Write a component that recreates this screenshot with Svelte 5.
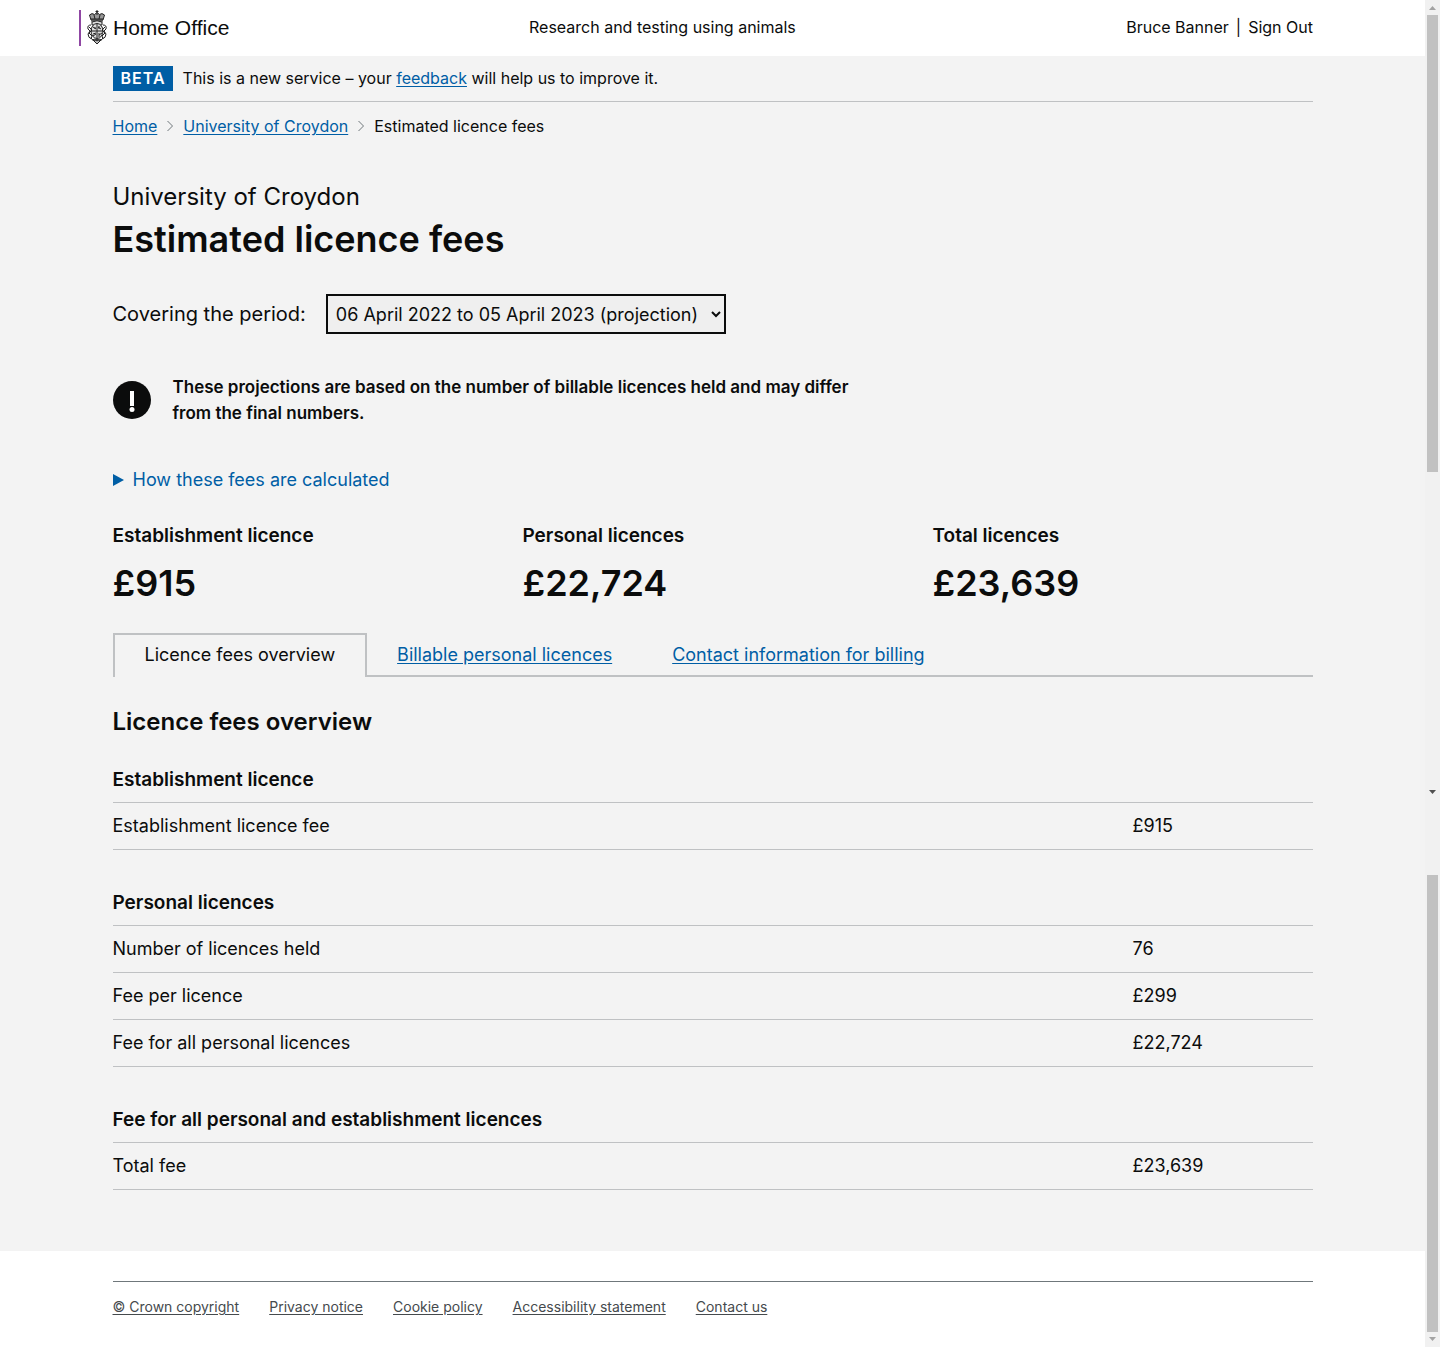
<script>
  const periods = ['06 April 2022 to 05 April 2023 (projection)', '06 April 2021 to 05 April 2022'];
  let period = $state(periods[0]);

  const totals = [
    { label: 'Establishment licence', amount: '£915' },
    { label: 'Personal licences', amount: '£22,724' },
    { label: 'Total licences', amount: '£23,639' }
  ];

  const sections = [
    { title: 'Establishment licence', rows: [['Establishment licence fee', '£915']] },
    {
      title: 'Personal licences',
      rows: [
        ['Number of licences held', '76'],
        ['Fee per licence', '£299'],
        ['Fee for all personal licences', '£22,724']
      ]
    },
    { title: 'Fee for all personal and establishment licences', rows: [['Total fee', '£23,639']] }
  ];

  const footerLinks = ['© Crown copyright', 'Privacy notice', 'Cookie policy', 'Accessibility statement', 'Contact us'];
</script>

<div class="window">
  <div class="page">
    <header>
      <div class="header-inner">
        <a class="logo" href="#home" aria-label="Home Office">
          <svg class="crest" viewBox="0 0 20 36" aria-hidden="true">
            <g fill="none" stroke="#222" stroke-width="1">
              <path d="M4 10 2.500 5Q5 2.500 7.500 4.500L10 2.500 12.500 4.500Q15 2.500 17.500 5L16 10Z" fill="#999" />
              <path d="M10 0v5M8.500 1.500h3M4 9h12M4 11h12M7 5l1 4M13 5l-1 4" />
              <path d="M5 12Q10 9.500 15 12L15 15H5Z" fill="#ddd" />
              <ellipse cx="10" cy="21" rx="6" ry="7.500" fill="#ddd" />
              <path d="M4 15Q0 15 1 19L3 21 1 24Q1 28 5 29L7 31M16 15Q20 15 19 19L17 21 19 24Q19 28 15 29L13 31" />
              <path d="M2 17l3 3-3 3 3 3-1 3M18 17l-3 3 3 3-3 3 1 3" />
              <path d="M10 14v14M4 21h12M6 17l3 2M11 17l3 2M6 24l3-1M12 25l3-2" />
              <path d="M7 18h2M12 16v3M6 26l3-2M12 23v4M5 30Q8 28 10 31 12 28 15 30M7 31l3-2 3 2-3 3Z" fill="#bbb" />
            </g>
          </svg>
          <span>Home Office</span>
        </a>
        <a class="service" href="#service">Research and testing using animals</a>
        <nav class="user" aria-label="Account">
          <a href="#profile">Bruce Banner</a><span>|</span><a href="#signout">Sign Out</a>
        </nav>
      </div>
    </header>

    <main>
      <div class="container">
        <div class="phase">
          <strong>BETA</strong>
          <span>This is a new service – your <a href="#feedback">feedback</a> will help us to improve it.</span>
        </div>

        <nav class="crumbs" aria-label="Breadcrumb">
          <a href="#home">Home</a>
          <svg viewBox="0 0 7 12" aria-hidden="true"><path d="M1 1l5 5-5 5" /></svg>
          <a href="#croydon">University of Croydon</a>
          <svg viewBox="0 0 7 12" aria-hidden="true"><path d="M1 1l5 5-5 5" /></svg>
          <span>Estimated licence fees</span>
        </nav>

        <div class="title">
          <p>University of Croydon</p>
          <h1>Estimated licence fees</h1>
        </div>

        <div class="period">
          <label for="period">Covering the period:</label>
          <select id="period" bind:value={period}>
            {#each periods as p}<option value={p}>{p}</option>{/each}
          </select>
        </div>

        <div class="warning">
          <svg viewBox="0 0 38 38" aria-hidden="true">
            <circle cx="19" cy="19" r="19" fill="#0b0c0c" />
            <path d="M17 10h4v15h-4z" fill="#fff" />
            <circle cx="19" cy="28.500" r="2.500" fill="#fff" />
          </svg>
          <strong>These projections are based on the number of billable licences held and may differ from the final numbers.</strong>
        </div>

        <details>
          <summary><svg viewBox="0 0 11 12" aria-hidden="true"><path d="M0 0l11 6-11 6z" /></svg><span>How these fees are calculated</span></summary>
          <p>Fees are based on the licences held during the period.</p>
        </details>

        <div class="totals">
          {#each totals as t}
            <section>
              <h3>{t.label}</h3>
              <p>{t.amount}</p>
            </section>
          {/each}
        </div>

        <nav class="tabs" aria-label="Fees">
          <a class="active" href="#overview" aria-current="page">Licence fees overview</a>
          <a href="#personal">Billable personal licences</a>
          <a href="#billing">Contact information for billing</a>
        </nav>

        <h2>Licence fees overview</h2>

        {#each sections as s}
          <section class="fees">
            <h3>{s.title}</h3>
            <table>
              <tbody>
                {#each s.rows as [name, value]}
                  <tr><th scope="row">{name}</th><td>{value}</td></tr>
                {/each}
              </tbody>
            </table>
          </section>
        {/each}
      </div>
    </main>

    <footer>
      <div class="container">
        <nav class="footer-links" aria-label="Footer">
          {#each footerLinks as link}<a href="#footer">{link}</a>{/each}
        </nav>
      </div>
    </footer>
  </div>

  <div class="scroll" aria-hidden="true">
    <div class="track upper">
      <svg class="faint" viewBox="0 0 15 15"><path d="M4 10h7L7.500 6z" /></svg>
      <div class="thumb"></div>
      <svg class="end" viewBox="0 0 15 15"><path d="M4 5h7L7.500 9z" /></svg>
    </div>
    <div class="track lower">
      <div class="thumb"></div>
      <svg class="faint" viewBox="0 0 15 15"><path d="M4 5h7L7.500 9z" /></svg>
    </div>
  </div>
</div>

<style>
  :global(body) {
    margin: 0;
    background: #fff;
  }
  * {
    box-sizing: border-box;
  }
  h1, h2, h3, p {
    margin: 0;
  }
  .window {
    display: flex;
    font-family: Inter, "Liberation Sans", sans-serif;
    font-size: 18px;
    line-height: 26px;
    color: #0b0c0c;
    text-rendering: optimizeSpeed;
  }
  .page {
    flex: 1;
    min-width: 0;
  }
  .container {
    max-width: 1200px;
    margin: 0 auto;
  }
  a {
    color: #005ea5;
    text-underline-offset: 2px;
  }
  header {
    padding: 0 96px 0 63px;
  }
  .header-inner {
    display: grid;
    grid-template-columns: 450px 1fr auto;
    align-items: center;
    max-width: 1234px;
    height: 56px;
    margin: 0 auto;
    font-size: 16px;
    line-height: 24px;
  }
  header a {
    color: #0b0c0c;
    text-decoration: none;
  }
  .service, .user {
    padding-bottom: 2px;
  }
  .logo {
    display: flex;
    align-items: center;
    gap: 6px;
    justify-self: start;
    height: 36px;
    padding-left: 6px;
    border-left: 2px solid #8f46a3;
    font-family: "Liberation Sans", Arial, sans-serif;
    font-size: 21px;
  }
  .crest {
    width: 20px;
    height: 36px;
  }
  .user {
    display: flex;
    gap: 7px;
  }
  main {
    padding-bottom: 61px;
    background: #f3f3f3;
  }
  .phase {
    display: flex;
    align-items: center;
    gap: 10px;
    padding: 10px 0;
    border-bottom: 1px solid #bfc1c3;
    font-size: 16px;
    line-height: 25px;
  }
  .phase strong {
    padding: 0 7px 0 8px;
    background: #005ea5;
    color: #fff;
    letter-spacing: 1px;
  }
  .crumbs {
    display: flex;
    align-items: center;
    gap: 9px;
    margin-top: 12px;
    font-size: 16px;
    line-height: 24px;
  }
  .crumbs svg {
    width: 8px;
    height: 12px;
    fill: none;
    stroke: #6f777b;
  }
  .title {
    margin-top: 44px;
  }
  .title p {
    font-size: 24px;
    line-height: 30px;
  }
  h1 {
    margin-top: 5px;
    font-size: 36px;
    line-height: 44px;
    font-weight: 600;
  }
  .period {
    display: flex;
    align-items: center;
    gap: 20px;
    margin-top: 33px;
    font-size: 20px;
  }
  select {
    width: 400px;
    height: 40px;
    padding: 5px 4px;
    border: 2px solid #0b0c0c;
    border-radius: 0;
    background: #efefef;
    color: #0b0c0c;
    font-family: inherit;
    font-size: 18px;
  }
  .warning {
    display: flex;
    gap: 22px;
    align-items: center;
    max-width: 770px;
    margin-top: 40px;
    font-size: 17px;
  }
  .warning svg {
    flex: none;
    width: 38px;
    height: 38px;
  }
  strong, h2, h3 {
    font-weight: 600;
  }
  details {
    margin-top: 41px;
  }
  summary {
    display: flex;
    align-items: center;
    gap: 9px;
    color: #005ea5;
    cursor: pointer;
  }
  summary svg {
    width: 11px;
    height: 12px;
    fill: #005ea5;
  }
  .totals {
    display: grid;
    grid-template-columns: repeat(3, 1fr);
    gap: 30px;
    margin-top: 30px;
  }
  h3 {
    font-size: 19px;
    line-height: 26px;
  }
  .totals p {
    margin-top: 12px;
    font-size: 36px;
    line-height: 44px;
    font-weight: 600;
  }
  .tabs {
    display: flex;
    margin-top: 28px;
    border-bottom: 2px solid #bfc1c3;
  }
  .tabs a {
    padding: 7px 30px;
    border-top: 2px solid transparent;
  }
  .tabs .active {
    margin-bottom: -2px;
    border: 2px solid #bfc1c3;
    border-bottom: 0;
    background: #f3f3f3;
    color: #0b0c0c;
    text-decoration: none;
  }
  h2 {
    margin: 30px 0;
    font-size: 24px;
    line-height: 30px;
  }
  .fees + .fees {
    margin-top: 40px;
  }
  table {
    width: 100%;
    margin-top: 9px;
    border-collapse: collapse;
  }
  tr {
    border-top: 1px solid #bfc1c3;
    border-bottom: 1px solid #bfc1c3;
  }
  th, td {
    padding: 10px 0;
    font-weight: 400;
    text-align: left;
  }
  td {
    width: 15%;
  }
  footer {
    padding: 30px 0 28px;
    background: #fff;
  }
  .footer-links {
    display: flex;
    gap: 30px;
    padding-top: 13px;
    border-top: 1px solid #6f777b;
    font-size: 14px;
    line-height: 24px;
  }
  .footer-links a {
    color: #454a4d;
  }
  .scroll {
    display: flex;
    flex: none;
    flex-direction: column;
    width: 15px;
    background: #f1f1f1;
  }
  .track {
    display: flex;
    flex-direction: column;
  }
  .track svg {
    width: 15px;
    height: 15px;
    fill: #505050;
  }
  .track .faint {
    fill: #a3a3a3;
  }
  .upper {
    height: 800px;
  }
  .upper .end {
    margin-top: auto;
  }
  .lower {
    flex: 1;
    justify-content: flex-end;
  }
  .thumb {
    height: 457px;
    margin: 0 2px;
    background: #c1c1c1;
  }
</style>
